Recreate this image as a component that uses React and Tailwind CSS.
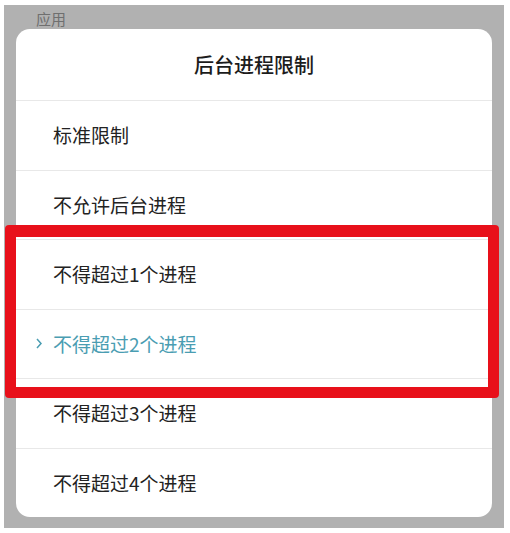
const options = [
  '标准限制',
  '不允许后台进程',
  '不得超过1个进程',
  '不得超过2个进程',
  '不得超过3个进程',
  '不得超过4个进程',
];

const selected = 3;

const font = { fontFamily: '"Noto Sans CJK SC", "Noto Sans", sans-serif' };

export default function App() {
  return (
    <div className="relative w-[510px] h-[533px] bg-white pt-[5px] pl-[4px]" style={font}>
      <div className="w-[500px] h-[523px] bg-[#b1b1b1] flex flex-col">
        <div className="h-[24px] pl-[32px] pt-[4px] text-[15px] leading-[20px] text-[#6f6f6f]">应用</div>
        <div className="ml-[12px] w-[476px] h-[488px] bg-white rounded-[14px] overflow-hidden flex flex-col">
          <div className="h-[71px] flex items-center justify-center text-[20px] font-medium text-[#1c1c1c]">
            后台进程限制
          </div>
          {options.map((label, i) => (
            <div
              key={label}
              className={
                'h-[69.5px] border-t border-[#e8e8e8] flex items-center pl-[37px] text-[19px] ' +
                (i === selected ? 'text-[#4a9db2]' : 'text-[#222222]')
              }
            >
              {i === selected ? (
                <svg width="6" height="11" viewBox="0 0 6 11" className="-ml-[17px] mr-[11px]">
                  <path d="M1 1l4 4.5L1 10" fill="none" stroke="#4a9db2" strokeWidth="1.5" />
                </svg>
              ) : null}
              {label}
            </div>
          ))}
        </div>
      </div>
      <div className="absolute left-[5px] top-[225px] w-[494px] h-[173px] border-[11px] border-t-[12px] border-[#e8101a] rounded-[4px]"></div>
    </div>
  );
}
